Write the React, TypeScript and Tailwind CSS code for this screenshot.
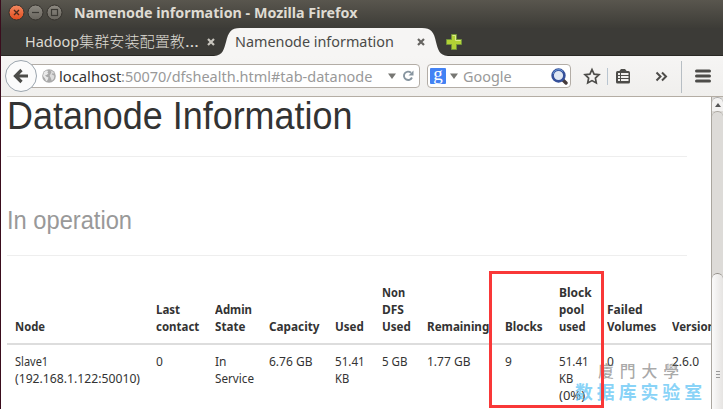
import { useLayoutEffect, useRef, useState, type ReactNode } from 'react';

const ui = "font-['Noto_Sans','Noto_Sans_CJK_SC',sans-serif]";

/* Single line of text stretched or condensed to a given advance width. */
function Fit({ w, className = '', children }: { w: number; className?: string; children: ReactNode }) {
  const ref = useRef<HTMLSpanElement>(null);
  const [scale, setScale] = useState(1);
  useLayoutEffect(() => {
    if (ref.current) setScale(w / ref.current.offsetWidth);
  }, [w]);
  return (
    <span className={`block shrink-0 whitespace-nowrap ${className}`} style={{ width: w }}>
      <span ref={ref} className="inline-block origin-left" style={{ transform: `scaleX(${scale})` }}>
        {children}
      </span>
    </span>
  );
}

type Line = [string, number];
const columns: { head: Line[]; cell: Line[] }[] = [
  { head: [['Node', 30]], cell: [['Slave1', 33], ['(192.168.1.122:50010)', 125]] },
  { head: [['Last', 24], ['contact', 43]], cell: [['0', 7]] },
  { head: [['Admin', 37], ['State', 30]], cell: [['In', 11], ['Service', 39]] },
  { head: [['Capacity', 51]], cell: [['6.76 GB', 43]] },
  { head: [['Used', 29]], cell: [['51.41', 30], ['KB', 14]] },
  { head: [['Non', 23], ['DFS', 22], ['Used', 29]], cell: [['5 GB', 26]] },
  { head: [['Remaining', 62]], cell: [['1.77 GB', 43]] },
  { head: [['Blocks', 38]], cell: [['9', 7]] },
  { head: [['Block', 33], ['pool', 25], ['used', 27]], cell: [['51.41', 30], ['KB', 14], ['(0%)', 26]] },
  { head: [['Failed', 36], ['Volumes', 49]], cell: [['0', 7]] },
  { head: [['Version', 43]], cell: [['2.6.0', 27]] },
];
const grid = 'grid grid-cols-[141px_59px_54px_66px_47px_45px_78px_54px_48px_65px_60px] pl-2';

function WindowButtons() {
  return (
    <svg width="64" height="28" viewBox="0 0 64 28" fill="none">
      <defs>
        <linearGradient id="close" x1="0" y1="0" x2="0" y2="1">
          <stop stopColor="#f58a62" />
          <stop offset="1" stopColor="#df4b1c" />
        </linearGradient>
        <linearGradient id="ctl" x1="0" y1="0" x2="0" y2="1">
          <stop stopColor="#8e8a82" />
          <stop offset="1" stopColor="#67645d" />
        </linearGradient>
      </defs>
      <circle cx="16.5" cy="12.5" r="7.5" fill="url(#close)" stroke="#35322d" />
      <path d="m14 10 5 5m0-5-5 5" stroke="#4b2a1c" strokeWidth="1.4" />
      <circle cx="35.5" cy="12.5" r="7.5" fill="url(#ctl)" stroke="#35322d" />
      <path d="M32 12.5h7" stroke="#3b3934" strokeWidth="1.2" />
      <circle cx="54.5" cy="12.5" r="7.5" fill="url(#ctl)" stroke="#35322d" />
      <rect x="51.5" y="9.5" width="6" height="6" stroke="#3b3934" strokeWidth="1.2" />
    </svg>
  );
}

function CloseMark({ color }: { color: string }) {
  return (
    <svg width="8" height="8" viewBox="0 0 8 8" className="shrink-0">
      <path d="m1 1 6 6m0-6L1 7" stroke={color} strokeWidth="2.2" />
    </svg>
  );
}

function Globe() {
  return (
    <svg width="14" height="14" viewBox="0 0 14 14" className="shrink-0">
      <circle cx="7" cy="7" r="6.8" fill="#a9a9a9" />
      <path d="M2 3.2 4.2 1.6l2 .4-.8 1.4 1 1L4.5 6 3 6.2l1.5 1.6 2 .6-1 2.8-1.3 1L3 9.5 1 7Z" fill="#e9e9e9" />
      <path d="m8.2 1.2 3 1.5 1.2 2-1.8-.5-1 1 2.8 1.6-.6 3-2 2-1.2-3.4-1-1.6.8-1.6L9.5 3Z" fill="#dcdcdc" />
    </svg>
  );
}

function Triangle() {
  return (
    <svg width="8" height="6" viewBox="0 0 8 6" className="shrink-0">
      <path d="M0 .5h8L4 6Z" fill="#777773" />
    </svg>
  );
}

export default function App() {
  return (
    <div className={`flex h-[409px] w-[723px] flex-col overflow-hidden border-l border-[#3a0d1d] bg-white ${ui}`}>
      <header className="-ml-px flex h-7 shrink-0 items-start bg-linear-to-b from-[#59564e] to-[#3d3c37]">
        <WindowButtons />
        <Fit w={284} className="ml-[10px] text-[14px] leading-[25px] font-bold text-[#dfdbd2]">
          Namenode information - Mozilla Firefox
        </Fit>
      </header>

      <div className="relative flex h-7 shrink-0 items-center bg-[#3c3b37]">
        <svg className="absolute inset-0" width="722" height="28" viewBox="0 0 722 28">
          <path d="M0 27.5h722" stroke="#292824" />
          <path
            d="M213 28c9-.5 10-7 12-14C227.500 4 230 0 239 0H421c9 0 12 4 14 14 1.800 7 3 13.500 12 14Z"
            fill="#f6f5f4"
          />
          <path
            d="M450.500 6.500h5v5h5v5h-5v5h-5v-5h-5v-5h5Z"
            fill="#b3d235"
            stroke="#72933a"
          />
          <path d="M451.500 7.500h3v5h5" fill="none" stroke="#dcec8c" />
        </svg>
        <div className="relative flex w-[234px] items-center pl-[24px] text-[#dddad3]">
          <Fit w={54} className="-mt-0.5 text-[15px] leading-7">Hadoop</Fit>
          <Fit w={106} className="-mt-0.5 font-['Noto_Sans_CJK_SC',sans-serif] text-[15px] leading-7 font-light">集群安装配置教</Fit>
          <Fit w={14} className="-mt-0.5 mr-[8px] text-[15px] leading-7">…</Fit>
          <CloseMark color="#c8c5be" />
        </div>
        <div className="relative flex items-center text-[#4a4a48]">
          <Fit w={159} className="-mt-0.5 mr-[23px] text-[15px] leading-7">Namenode information</Fit>
          <CloseMark color="#666461" />
        </div>
      </div>

      <nav className="flex h-[41px] shrink-0 items-center border-b border-[#b4ada4] bg-linear-to-b from-[#f6f5f4] to-[#f0efed] pl-1">
        <div className="relative z-10 flex size-8 shrink-0 items-center justify-center rounded-full border border-[#9ba5ae] bg-[#fbfbfb]">
          <svg width="16" height="16" viewBox="0 0 16 16" fill="none">
            <path d="M15 8H4M8.500 2 2.500 8l6 6" stroke="#4c4c49" strokeWidth="3.200" />
          </svg>
        </div>
        <div className="-ml-2 flex h-6 w-[391px] shrink-0 items-center rounded-r-sm border border-[#b3ada6] bg-white pl-[12px]">
          <Globe />
          <Fit w={62} className="ml-[3px] text-[15px] leading-[22px] text-[#333]">localhost</Fit>
          <Fit w={251} className="text-[15px] leading-[22px] text-[#999]">:50070/dfshealth.html#tab-datanode</Fit>
          <span className="w-[16px] shrink-0" />
          <Triangle />
          <svg width="12" height="12" viewBox="0 0 12 12" fill="none" className="ml-[6px] shrink-0">
            <path d="M9 2.700A4.200 4.200 0 1 0 10 7.500" stroke="#8795a0" strokeWidth="1.900" />
            <path d="M11.500.500v5h-5Z" fill="#8795a0" />
          </svg>
        </div>
        <div className="ml-[7px] flex h-6 w-[144px] shrink-0 items-center rounded-sm border border-[#b3ada6] bg-white pl-[2px]">
          <span className="flex size-4 shrink-0 justify-center rounded-[1px] bg-[#4382f4] font-['Liberation_Serif',serif] text-[19px] leading-[11px] text-white">g</span>
          <span className="w-1" />
          <Triangle />
          <Fit w={49} className="ml-[5px] text-[15px] leading-[22px] text-[#999]">Google</Fit>
          <svg width="17" height="17" viewBox="0 0 17 17" fill="none" className="ml-[39px] shrink-0">
            <path d="m12 12 3 3" stroke="#453b3d" strokeWidth="3.400" strokeLinecap="round" />
            <circle cx="7.500" cy="7.500" r="5.900" fill="#dfe7f3" stroke="#35509a" strokeWidth="2.600" />
            <path d="M2 6A5.800 5.800 0 0 1 12 3.500" stroke="#6d9bd8" />
          </svg>
        </div>
        <svg width="152" height="40" viewBox="570 0 152 40" fill="none" className="shrink-0">
          <path d="m591 13.500 2.100 4.600 4.900.6-3.600 3.400.9 4.900-4.300-2.400-4.300 2.400.9-4.900-3.600-3.400 4.900-.6Z" stroke="#4d4c49" strokeWidth="1.700" />
          <path d="M606.500 12v17" stroke="#b9c5d0" />
          <rect x="615" y="15" width="14" height="12.500" rx="1.500" fill="#4d4c49" />
          <path d="M618 15.500 620 13h4l2 2.500Z" fill="#4d4c49" />
          <path d="M617 18h2m1 0h7.500m-10.500 3h2m1 0h7.500m-10.500 3h2m1 0h7.500" stroke="#f1f0ee" strokeWidth="2" />
          <path d="m655.500 16.500 4 4-4 4m5.500-8 4 4-4 4" stroke="#4d4c49" strokeWidth="2" />
          <path d="M680.500 5v32" stroke="#b7bec4" />
          <path d="M695.500 15h13m-13 5h13m-13 5h13" stroke="#4d4c49" strokeWidth="3" strokeLinecap="round" />
        </svg>
      </nav>

      <div className="flex min-h-0 flex-1">
        <main className="relative w-[710px] shrink-0 overflow-hidden pl-[6px]">
          <section className="mr-6 h-[60px] border-b border-[#eee] font-['Liberation_Sans',sans-serif]">
            <Fit w={345} className="text-[38px] leading-[39px] text-[#333]">Datanode Information</Fit>
          </section>
          <section className="mr-6 h-[99px] border-b border-[#eee] pt-[49px] font-['Liberation_Sans',sans-serif]">
            <Fit w={125} className="text-[25px] leading-[28px] text-[#999]">In operation</Fit>
          </section>
          <div className={`${grid} h-[89px] items-end border-b-2 border-[#ddd] pb-2 text-[12px] leading-[17px] font-bold text-[#333]`}>
            {columns.map((c, i) => (
              <div key={i}>{c.head.map(([t, w]) => <Fit key={t} w={w}>{t}</Fit>)}</div>
            ))}
          </div>
          <div className={`${grid} pt-2 text-[12px] leading-[17px] text-[#333]`}>
            {columns.map((c, i) => (
              <div key={i}>{c.cell.map(([t, w]) => <Fit key={t} w={w}>{t}</Fit>)}</div>
            ))}
          </div>
          <div className="absolute top-[263px] left-[574px] font-['Noto_Sans_CJK_TC',sans-serif]">
            <Fit w={87} className="ml-[23px] h-[21px] text-[16px] leading-[21px] font-medium tracking-[6px] text-[#777]/65">廈門大學</Fit>
            <Fit w={131} className="h-[20px] font-['Noto_Sans_CJK_SC',sans-serif] text-[18px] leading-[20px] font-bold tracking-[4px] text-[#62c5f5]/75">数据库实验室</Fit>
          </div>
          <div className="absolute top-[174px] left-[488px] h-[137px] w-[115px] border-3 border-[#f93838]" />
        </main>
        <aside className="flex w-[12px] shrink-0 flex-col border-l border-[#aaa69f] bg-[#dddbd8]">
          <div className="flex h-[14px] items-center justify-center rounded-t-md border-t border-[#aaa] bg-[#f3f2f1]">
            <svg width="6" height="4" viewBox="0 0 6 4"><path d="m0 4 3-4 3 4Z" fill="#555" /></svg>
          </div>
          <div className="h-[162px] rounded-t-md border-t border-[#aaa69f]" />
          <div className="flex flex-1 flex-col items-center rounded-t-md border-t border-[#918d87] bg-linear-to-r from-[#fafafa] to-[#e6e4e2] pt-[97px]">
            <span className="mb-[2px] h-px w-1 bg-[#999]" />
            <span className="mb-[2px] h-px w-1 bg-[#999]" />
            <span className="h-px w-1 bg-[#999]" />
          </div>
        </aside>
      </div>
    </div>
  );
}
